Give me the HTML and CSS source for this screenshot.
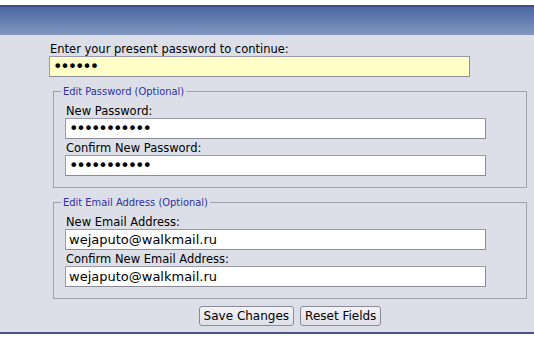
FILE: index.html
```html
<!DOCTYPE html>
<html>
<head>
<meta charset="utf-8">
<link rel="stylesheet" href="styles.css">
</head>
<body>
<div class="masthead"></div>
<main class="panel">
  <form class="form">
    <label class="lbl" for="cur">Enter your present password to continue:</label>
    <input id="cur" class="field field-secret field-current" type="password" value="secret">

    <fieldset class="group">
      <legend class="legend">Edit Password (Optional)</legend>
      <label class="lbl" for="np">New Password:</label>
      <input id="np" class="field field-secret" type="password" value="newpassword">
      <label class="lbl lbl-next" for="cp">Confirm New Password:</label>
      <input id="cp" class="field field-secret" type="password" value="newpassword">
    </fieldset>

    <fieldset class="group">
      <legend class="legend">Edit Email Address (Optional)</legend>
      <label class="lbl" for="ne">New Email Address:</label>
      <input id="ne" class="field" type="text" value="wejaputo@walkmail.ru">
      <label class="lbl lbl-next" for="ce">Confirm New Email Address:</label>
      <input id="ce" class="field" type="text" value="wejaputo@walkmail.ru">
    </fieldset>

    <div class="actions">
      <button type="button" class="btn">Save Changes</button>
      <button type="reset" class="btn">Reset Fields</button>
    </div>
  </form>
</main>
</body>
</html>
```
FILE: styles.css
```css
html, body {
  margin: 0;
  padding: 0;
  background: #ffffff;
}

body {
  font-family: "DejaVu Sans", Verdana, sans-serif;
  color: #000;
}

.masthead {
  margin-top: 5px;
  height: 28px;
  border-top: 2px solid #3a4f88;
  background: linear-gradient(#4a67a3, #8197bf);
}

.panel {
  background: #dcdfe7;
  padding: 7px 7px 6px 49px;
  border-bottom: 2px solid #46587f;
}

.form {
  display: flex;
  flex-direction: column;
  align-items: flex-start;
}

.lbl {
  display: block;
  font-size: 11.5px;
  line-height: 14px;
  height: 14px;
  padding-left: 1px;
}

.lbl-next {
  margin-top: 2px;
}

.field {
  display: block;
  box-sizing: border-box;
  width: 421px;
  height: 21px;
  margin: 0;
  padding: 0 3px;
  border: 1px solid #9a9aa8;
  border-right-color: #8c8c98;
  border-bottom-color: #8c8c98;
  background: #ffffff;
  font-family: "DejaVu Sans", Verdana, sans-serif;
  font-size: 13px;
  color: #000;
  outline: none;
}

.field-secret {
  font-size: 16px;
  letter-spacing: -2.1px;
}

.field-current {
  background: #ffffc8;
}

.group {
  box-sizing: border-box;
  width: 474px;
  margin: 8px 0 0 4px;
  padding: 6px 0 11px 11px;
  border: 1px solid #a0a0aa;
  min-inline-size: 0;
}

.legend {
  margin-left: -4px;
  padding: 0 2px;
  font-family: "DejaVu Sans Condensed", "Liberation Sans", sans-serif;
  font-size: 11px;
  line-height: 13px;
  color: #2f2fa6;
}

.actions {
  display: flex;
  gap: 6px;
  justify-content: center;
  width: 482px;
  margin-top: 7px;
}

.btn {
  box-sizing: border-box;
  height: 20px;
  padding: 0 4px;
  border: 1px solid #8a8a96;
  border-radius: 3px;
  background: linear-gradient(#f3f3f6, #dfe0e6);
  font-family: "DejaVu Sans", Verdana, sans-serif;
  font-size: 12px;
  color: #000;
}
```
